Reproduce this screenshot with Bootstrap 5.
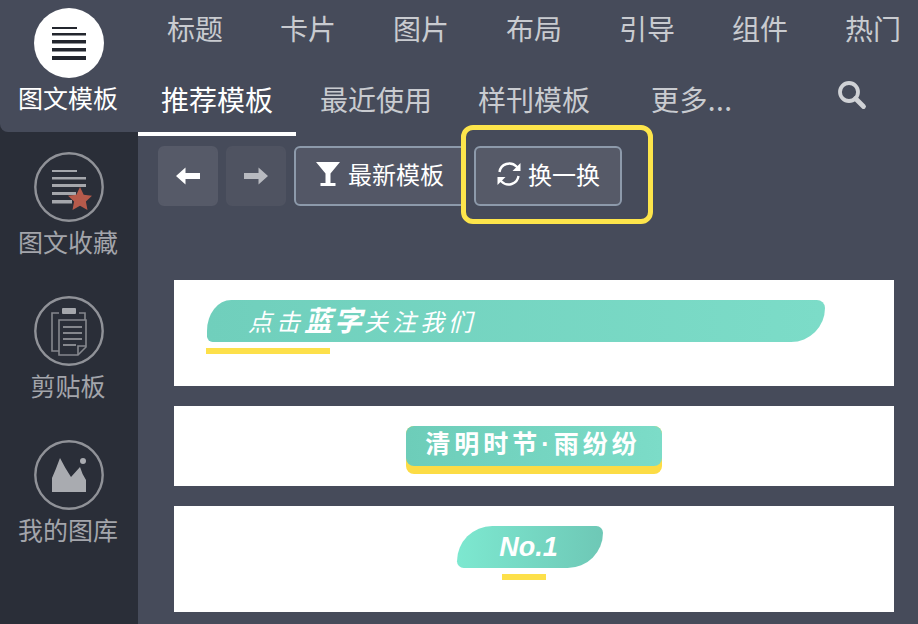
<!DOCTYPE html>
<html lang="zh-CN">
<head>
    <meta charset="UTF-8">
    <meta name="viewport" content="width=device-width, initial-scale=1.0">
    <title>图文模板</title>
    <link href="https://cdn.jsdelivr.net/npm/bootstrap@5.3.0/dist/css/bootstrap.min.css" rel="stylesheet">
    <style>
        /* Page frame */
        body {
            background-color: #464b5a;
            font-family: "Noto Sans CJK SC", "Noto Sans", sans-serif;
            height: 624px;
            overflow: hidden;
        }

        /* Left rail */
        .side-rail {
            width: 138px;
            height: 624px;
            background-color: #2a2e38;
            color: #a3a5ab;
        }

        .rail-item {
            height: 144px;
            padding-top: 20px;
            font-size: 25px;
            line-height: 38px;
        }

        .rail-item span {
            margin-right: 2px;
        }

        .rail-item.rail-active {
            height: 132px;
            padding-top: 8px;
            color: #fff;
            background-color: #464b5a;
            border-bottom-left-radius: 8px;
        }

        .rail-item svg {
            display: block;
            width: 70px;
            height: 70px;
        }

        /* Tabs */
        .main-area {
            width: 780px;
        }

        .cat-row {
            height: 66px;
            padding-left: 29px;
            font-size: 28px;
            color: #c9cbd0;
            gap: 57px;
            line-height: 56px;
        }

        .tab-row {
            height: 70px;
            font-size: 28px;
            color: #c9cbd0;
        }

        .tab-link {
            padding: 0 23px 0 24px;
            height: 70px;
            line-height: 66px;
            white-space: nowrap;
        }

        .tab-link.tab-on {
            padding: 0 23px;
            color: #fff;
            border-bottom: 4px solid #fff;
        }

        .tab-link.tab-third {
            padding: 0 24px 0 23px;
        }

        .tab-more {
            margin-left: 37px;
            line-height: 66px;
            letter-spacing: .4px;
        }

        .tab-search {
            width: 30px;
            height: 30px;
            margin-left: 105px;
            margin-top: 14px;
        }

        /* Toolbar */
        .tool-row {
            padding: 10px 0 0 20px;
            height: 144px;
            gap: 8px;
        }

        .tool-btn {
            height: 60px;
            color: #fff;
            font-size: 24px;
            line-height: 1;
            border-radius: 6px;
            background-color: #565a68;
            border: 2px solid #8d9aab;
            display: flex;
            align-items: center;
            padding: 0 0 4px;
        }

        .tool-arrow {
            width: 60px;
            justify-content: center;
            border-color: #565a68;
            padding: 0;
        }

        .tool-arrow.arrow-off {
            background-color: #4f5361;
            border-color: #4f5361;
        }

        .tool-new {
            width: 176px;
            padding-left: 20px;
            gap: 8px;
            background-color: #535766;
            white-space: nowrap;
        }

        .tool-mark {
            position: relative;
            margin: -21px 0 0 -17px;
            padding: 16px 26px 13px 8px;
            border: 5px solid #fde54b;
            border-radius: 12px;
            background-color: #464b5a;
            height: 99px;
        }

        .tool-swap {
            width: 148px;
            padding-left: 20px;
            gap: 6px;
            white-space: nowrap;
        }

        /* Template cards */
        .tpl-card {
            width: 720px;
            margin-left: 36px;
            margin-bottom: 20px;
            background-color: #fff;
        }

        .tpl-one {
            height: 106px;
            padding: 20px 0 0 33px;
        }

        .one-band {
            width: 618px;
            height: 42px;
            border-radius: 30px 10px 42px 7px / 38px 10px 42px 7px;
            background-image: linear-gradient(to right, #70cfbc, #7cdcc8);
            color: #fff;
            padding-left: 41px;
            font-size: 24px;
            font-style: italic;
            line-height: 38px;
            letter-spacing: 4px;
        }

        .one-band b {
            font-size: 28px;
            letter-spacing: 2px;
        }

        .one-bar {
            width: 124px;
            height: 6px;
            margin: 6px 0 0 -1px;
            background-color: #fde04a;
        }

        .tpl-two {
            height: 80px;
            padding-top: 20px;
        }

        .two-badge {
            width: 256px;
            height: 48px;
            border-radius: 8px;
            background-color: #fcdc45;
        }

        .two-text {
            height: 40px;
            border-radius: 8px;
            padding-right: 2px;
            background-image: linear-gradient(to right, #6dcdb9, #7cdcc8);
            color: #fff;
            font-family: "Liberation Sans", "Noto Sans CJK SC", sans-serif;
            font-size: 25px;
            font-weight: 700;
            line-height: 36px;
            letter-spacing: 4px;
            text-align: center;
            white-space: nowrap;
        }

        .tpl-three {
            height: 106px;
            padding-top: 20px;
        }

        .three-leaf {
            width: 146px;
            height: 42px;
            margin-right: 8px;
            padding-right: 3px;
            border-radius: 42px 8px 42px 8px;
            background-image: linear-gradient(to right, #7de8d0, #6ec8b6);
            color: #fff;
            font-family: "Liberation Sans", sans-serif;
            font-size: 27px;
            font-weight: 700;
            font-style: italic;
            line-height: 42px;
            text-align: center;
        }

        .three-bar {
            width: 44px;
            height: 6px;
            margin: 6px 20px 0 0;
            background-color: #fde04a;
        }
    </style>
</head>
<body>

<div class="d-flex">
    <!-- 左侧栏 -->
    <aside class="side-rail flex-shrink-0">
        <div class="rail-item rail-active d-flex flex-column align-items-center">
            <svg viewBox="0 0 70 70">
                <circle cx="35" cy="35" r="35" fill="#fff"/>
                <g fill="#23262e">
                    <rect x="18" y="19" width="25" height="2"/>
                    <rect x="18" y="25" width="34" height="2.5"/>
                    <rect x="18" y="32" width="34" height="3.5"/>
                    <rect x="18" y="40" width="34" height="3.5"/>
                    <rect x="18" y="48" width="34" height="4"/>
                </g>
            </svg>
            <span>图文模板</span>
        </div>
        <div class="rail-item d-flex flex-column align-items-center">
            <svg viewBox="0 0 70 70">
                <circle cx="35" cy="35" r="33.7" fill="none" stroke="#909298" stroke-width="2.4"/>
                <g fill="#a5a7ac">
                    <rect x="18" y="18" width="25" height="2"/>
                    <rect x="18" y="25" width="34" height="2.500"/>
                    <rect x="18" y="32" width="34" height="3"/>
                    <rect x="18" y="40" width="24" height="3"/>
                    <rect x="18" y="48" width="20" height="3.500"/>
                </g>
                <path d="M46 35l3.700 7.800 8.300 1-6.100 5.800 1.600 8.400-7.500-4.200-7.500 4.200 1.600-8.400-6.100-5.800 8.300-1z" fill="#b65a4b"/>
            </svg>
            <span>图文收藏</span>
        </div>
        <div class="rail-item d-flex flex-column align-items-center">
            <svg viewBox="0 0 70 70">
                <circle cx="35" cy="35" r="33.7" fill="none" stroke="#909298" stroke-width="2.4"/>
                <g fill="none" stroke="#85878d" stroke-width="1.6">
                    <path d="M25 17h-7v38h7"/>
                    <path d="M45 17h6v7"/>
                    <path d="M25 24h27v27l-8 8h-19z"/>
                    <path d="M52 50h-8v9"/>
                    <path d="M29 31h19M29 37h19M29 43h19M29 49h13" stroke-width="2"/>
                </g>
                <rect x="28" y="12" width="14" height="6" rx="1" fill="#a5a7ac"/>
            </svg>
            <span>剪贴板</span>
        </div>
        <div class="rail-item d-flex flex-column align-items-center">
            <svg viewBox="0 0 70 70">
                <circle cx="35" cy="35" r="33.7" fill="none" stroke="#909298" stroke-width="2.4"/>
                <path d="M18 52v-14q4-9 8-20q5 10 11 19l9-10q2 7 6 13v12z" fill="#a9abb0"/>
                <circle cx="49" cy="21" r="3" fill="#a9abb0"/>
            </svg>
            <span>我的图库</span>
        </div>
    </aside>

    <main class="main-area">
        <!-- 分类 -->
        <div class="cat-row d-flex">
            <span>标题</span><span>卡片</span><span>图片</span><span>布局</span><span>引导</span><span>组件</span><span>热门</span>
        </div>

        <!-- 标签 -->
        <div class="tab-row d-flex">
            <div class="tab-link tab-on">推荐模板</div>
            <div class="tab-link">最近使用</div>
            <div class="tab-link tab-third">样刊模板</div>
            <div class="tab-more">更多...</div>
            <svg class="tab-search" viewBox="0 0 30 30">
                <circle cx="12" cy="12" r="9" fill="none" stroke="#d0d2d6" stroke-width="3.800"/>
                <path d="M18.500 18.500l8 8" stroke="#d0d2d6" stroke-width="4.800" stroke-linecap="round"/>
            </svg>
        </div>

        <!-- 工具栏 -->
        <div class="tool-row d-flex align-items-start">
            <button type="button" class="btn tool-btn tool-arrow">
                <svg width="24" height="18" viewBox="0 0 24 18"><path d="M0 9l9.500-8.500v5.500h14.500v6h-14.500v5.500z" fill="#fff"/></svg>
            </button>
            <button type="button" class="btn tool-btn tool-arrow arrow-off">
                <svg width="24" height="18" viewBox="0 0 24 18"><path d="M24 9l-9.500-8.500v5.500h-14.500v6h14.500v5.500z" fill="#b8bac0"/></svg>
            </button>
            <button type="button" class="btn tool-btn tool-new">
                <svg width="24" height="26" viewBox="0 0 24 26"><path d="M0 1h24l-9.500 11.500v9.500h5v3h-15v-3h5v-9.500z" fill="#fff"/></svg>
                <span>最新模板</span>
            </button>
            <div class="tool-mark">
                <button type="button" class="btn tool-btn tool-swap">
                    <svg width="26" height="26" viewBox="0 0 26 26" fill="none" stroke="#fff" stroke-width="2.400">
                        <path d="M3.500 11a10 10 0 0 1 17-5.500l2.500 2.500"/>
                        <path d="M22.500 15a10 10 0 0 1-17 5.500l-2.500-2.500"/>
                        <path d="M24.500 2v8h-8z" fill="#fff" stroke="none"/>
                        <path d="M1.500 24v-8h8z" fill="#fff" stroke="none"/>
                    </svg>
                    <span>换一换</span>
                </button>
            </div>
        </div>

        <!-- 模板列表 -->
        <div class="tpl-card tpl-one">
            <div class="one-band">点击<b>蓝字</b>关注我们</div>
            <div class="one-bar"></div>
        </div>
        <div class="tpl-card tpl-two d-flex justify-content-center">
            <div class="two-badge">
                <div class="two-text">清明时节·雨纷纷</div>
            </div>
        </div>
        <div class="tpl-card tpl-three d-flex flex-column align-items-center">
            <div class="three-leaf">No.1</div>
            <div class="three-bar"></div>
        </div>
    </main>
</div>

<script src="https://cdn.jsdelivr.net/npm/bootstrap@5.3.0/dist/js/bootstrap.bundle.min.js"></script>
</body>
</html>
